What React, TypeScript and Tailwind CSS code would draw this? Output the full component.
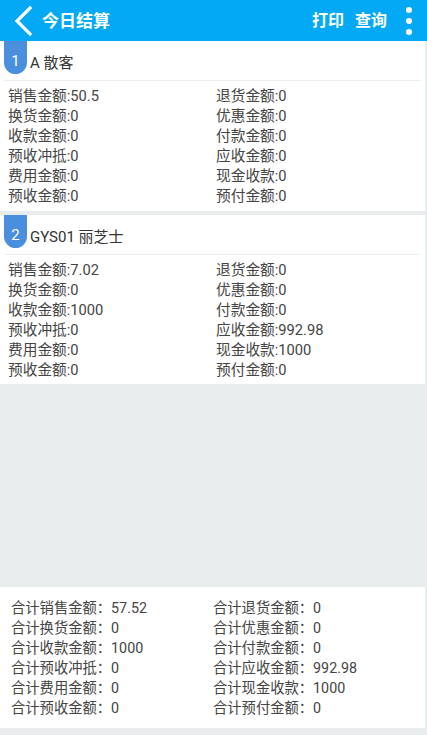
import React from "react";

const font = { fontFamily: 'Roboto, "Noto Sans CJK SC", sans-serif' };

type Pair = [string, string];

const card1: Pair[] = [
  ["销售金额:50.5", "退货金额:0"],
  ["换货金额:0", "优惠金额:0"],
  ["收款金额:0", "付款金额:0"],
  ["预收冲抵:0", "应收金额:0"],
  ["费用金额:0", "现金收款:0"],
  ["预收金额:0", "预付金额:0"],
];

const card2: Pair[] = [
  ["销售金额:7.02", "退货金额:0"],
  ["换货金额:0", "优惠金额:0"],
  ["收款金额:1000", "付款金额:0"],
  ["预收冲抵:0", "应收金额:992.98"],
  ["费用金额:0", "现金收款:1000"],
  ["预收金额:0", "预付金额:0"],
];

const totals: Pair[] = [
  ["合计销售金额：57.52", "合计退货金额：0"],
  ["合计换货金额：0", "合计优惠金额：0"],
  ["合计收款金额：1000", "合计付款金额：0"],
  ["合计预收冲抵：0", "合计应收金额：992.98"],
  ["合计费用金额：0", "合计现金收款：1000"],
  ["合计预收金额：0", "合计预付金额：0"],
];

function Card({ n, title, rows, h }: { n: string; title: string; rows: Pair[]; h: string }) {
  return (
    <div className={`w-[425px] bg-white flex flex-col ${h}`}>
      <div className="h-[39px] flex items-start pl-[4px]">
        <div className="w-[23px] h-[33px] bg-[#4a8fde] rounded-b-[12px] flex items-end justify-center pb-[3px] text-white text-[15px] leading-[20px]">
          {n}
        </div>
        <div className="ml-[3px] mt-[12px] text-[15px] leading-[20px] text-[#333]">{title}</div>
      </div>
      <div className="mx-[4px] h-px bg-[#eeeeee]" />
      <div className="flex flex-col pt-[5px] pl-[8px]">
        {rows.map((r, i) => (
          <div key={i} className="grid grid-cols-[208px_1fr] h-[20px] items-center text-[14.7px] text-[#444] leading-[20px]">
            <span>{r[0]}</span>
            <span>{r[1]}</span>
          </div>
        ))}
      </div>
    </div>
  );
}

export default function App() {
  return (
    <div className="w-[427px] h-[735px] flex flex-col bg-[#e8ecec] overflow-hidden" style={font}>
      <div className="h-[41px] bg-[#03a9f4] flex items-center text-white shrink-0">
        <svg width="24" height="32" viewBox="0 0 24 32" className="ml-[11px]">
          <path d="M19 3 L6 16 L19 29" fill="none" stroke="white" strokeWidth="3.2" strokeLinecap="square" />
        </svg>
        <div className="ml-[7px] text-[17px] font-bold leading-[24px]">今日结算</div>
        <div className="ml-auto text-[16px] font-bold leading-[24px]">打印</div>
        <div className="ml-[11px] text-[16px] font-bold leading-[24px]">查询</div>
        <div className="ml-[19px] mr-[15px] flex flex-col gap-[5px]">
          <div className="w-[6px] h-[6px] rounded-full bg-white" />
          <div className="w-[6px] h-[6px] rounded-full bg-white" />
          <div className="w-[6px] h-[6px] rounded-full bg-white" />
        </div>
      </div>
      <Card n="1" title="A 散客" rows={card1} h="h-[170px]" />
      <div className="h-[4px]" />
      <Card n="2" title="GYS01 丽芝士" rows={card2} h="h-[169px]" />
      <div className="flex-1" />
      <div className="w-[425px] bg-white pt-[11px] pb-[10px] pl-[11px] mb-[7px]">
        {totals.map((r, i) => (
          <div key={i} className="grid grid-cols-[202px_1fr] h-[20px] items-center text-[14.3px] text-[#444] leading-[20px]">
            <span>{r[0]}</span>
            <span>{r[1]}</span>
          </div>
        ))}
      </div>
    </div>
  );
}
